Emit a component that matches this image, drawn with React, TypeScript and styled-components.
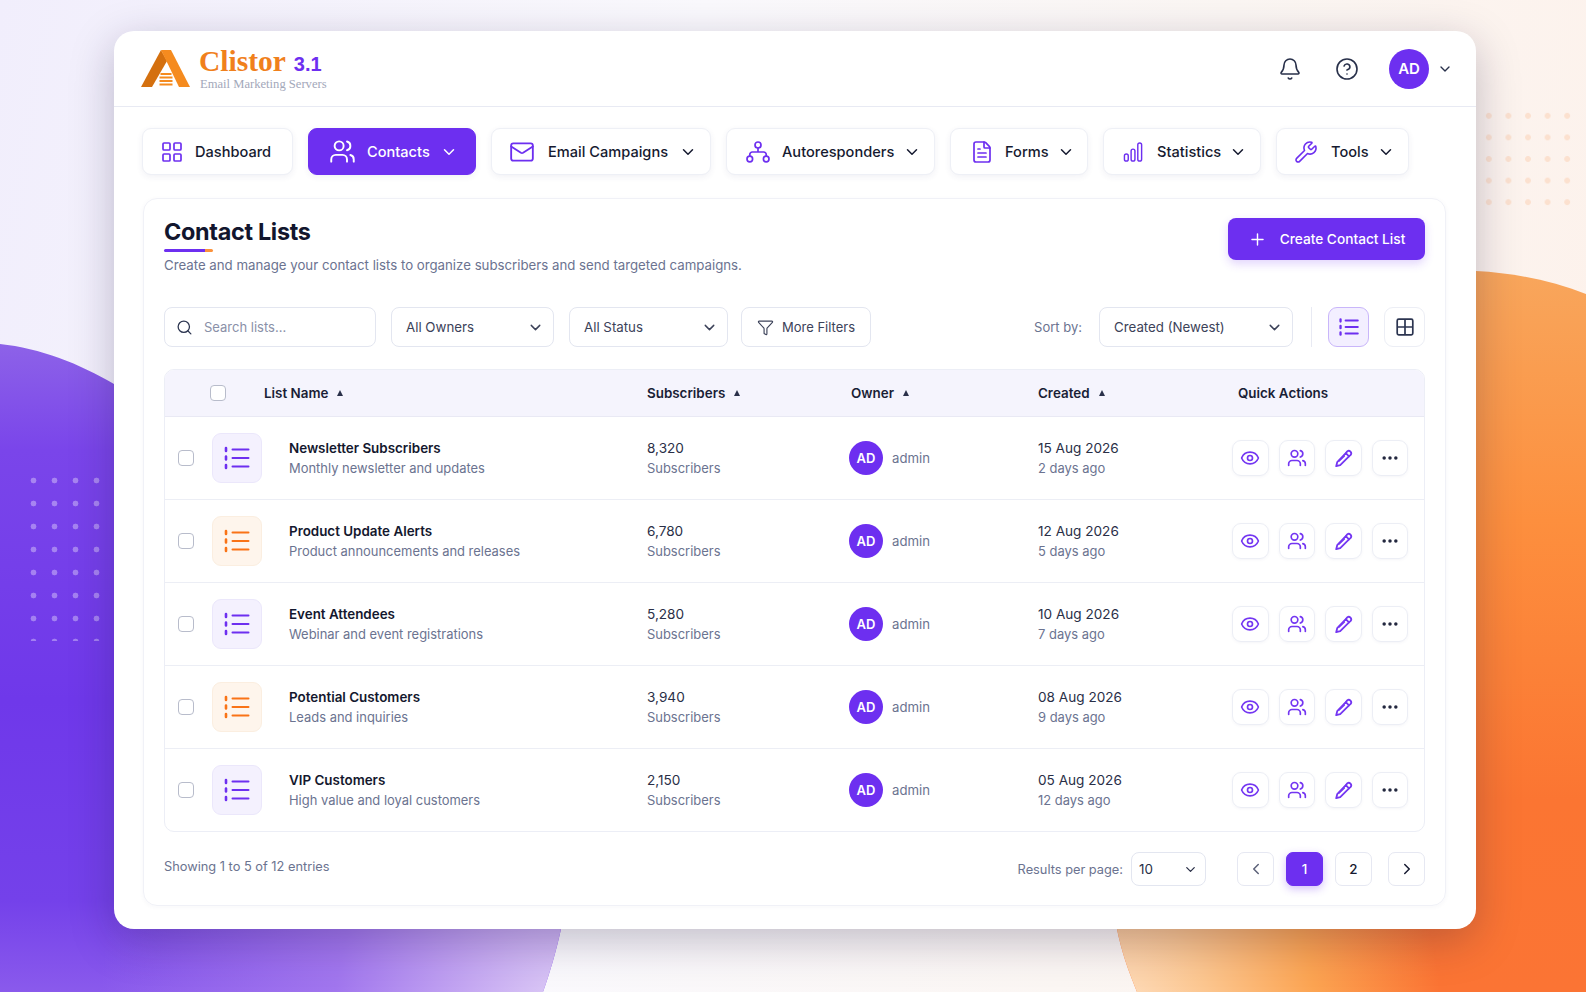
import styled, { createGlobalStyle } from "styled-components";
import {
  Bell,
  ChevronDown,
  ChevronLeft,
  ChevronRight,
  CircleHelp,
  Ellipsis,
  Eye,
  FileText,
  Funnel,
  LayoutGrid,
  Mail,
  Plus,
  Search,
  Users,
  Wrench,
} from "lucide-react";
import type { ReactNode } from "react";

const purple = "#6d2ff0";
const ink = "#161a30";
const muted = "#6b7390";
const line = "#e8eaf3";

const GlobalStyle = createGlobalStyle`
  * { box-sizing: border-box; }
  html, body { margin: 0; height: 100%; }
  body {
    font-family: Inter, "Liberation Sans", sans-serif;
    color: ${ink};
    overflow: hidden;
  }
`;

const Page = styled.div`
  position: relative;
  width: 1586px;
  height: 992px;
  overflow: hidden;
  padding: 31px 110px 63px 114px;
  background: linear-gradient(100deg, #f1eefc 0%, #faf9fd 40%, #fbf6f3 70%, #fdf1ea 100%);
`;
const PurpleBlob = styled.div`
  position: absolute;
  inset: 0;
  clip-path: path("M0 344 C40 348 80 364 114 384 L600 600 L561 929 C556 952 550 972 543 992 L0 992 Z");
  background:
    radial-gradient(circle 470px at 570px 1010px, #e0d0f6 0%, #c5a8f2 22%, #a176ee 50%, rgba(125, 70, 236, 0) 100%),
    linear-gradient(180deg, #8d62e8 344px, #7a45ea 450px, #6f38ea 700px, #7441ea 900px, #8a5aec 992px);
`;
const OrangeBlob = styled.div`
  position: absolute;
  inset: 0;
  clip-path: path("M1476 271 C1515 273 1552 281 1586 294 L1586 992 L1137 992 C1128 970 1121 950 1117 929 L1100 600 Z");
  background:
    radial-gradient(circle 330px at 1110px 1010px, #fee0c4 0%, #fcc68f 30%, #fca452 62%, rgba(252, 140, 60, 0) 100%),
    linear-gradient(180deg, #f8a65c 271px, #fd8f3e 520px, #fb7532 800px, #fb7434 992px);
`;
const Dots = styled.div<{ $color: string; $stepX: number; $stepY: number }>`
  position: absolute;
  background-image: radial-gradient(circle, ${(p) => p.$color} 2.6px, transparent 3.2px);
  background-size: ${(p) => p.$stepX}px ${(p) => p.$stepY}px;
`;
const LeftDots = styled(Dots)`
  left: 23px;
  top: 469px;
  width: 84px;
  height: 172px;
`;
const RightDots = styled(Dots)`
  left: 1479px;
  top: 105px;
  width: 98px;
  height: 108px;
`;

const Card = styled.div`
  position: relative;
  height: 898px;
  background: #fff;
  border-radius: 20px;
  box-shadow: 0 12px 44px rgba(30, 20, 60, 0.26);
`;
const TopBar = styled.header`
  height: 76px;
  display: flex;
  align-items: center;
  justify-content: space-between;
  padding: 0 23px 0 27px;
  border-bottom: 1px solid ${line};
`;
const Brand = styled.div`
  display: flex;
  align-items: center;
  gap: 9px;
`;
const BrandText = styled.div`
  font-family: "Liberation Serif", serif;
  display: flex;
  flex-direction: column;
  padding-top: 1px;
`;
const BrandName = styled.div`
  font-size: 29.500px;
  line-height: 28px;
  font-weight: 700;
  color: #f0801c;
  display: flex;
  align-items: baseline;
  gap: 8px;
`;
const BrandVersion = styled.span`
  font-family: "Liberation Sans", sans-serif;
  font-size: 20px;
  color: ${purple};
`;
const BrandTag = styled.div`
  font-size: 12.600px;
  line-height: 13px;
  margin-left: 1px;
  color: #a3a8ba;
`;
const TopActions = styled.div`
  display: flex;
  align-items: center;
`;
const TopIcon = styled.span<{ $gap: number }>`
  display: flex;
  color: #28304a;
  margin-right: ${(p) => p.$gap}px;
`;
const TopAvatar = styled.div`
  width: 40px;
  height: 40px;
  border-radius: 50%;
  background: ${purple};
  color: #fff;
  font-size: 15px;
  font-weight: 600;
  display: flex;
  align-items: center;
  justify-content: center;
  margin-right: 8px;
`;

const Nav = styled.nav`
  display: flex;
  gap: 15px;
  padding: 21px 28px 0;
`;
const NavItem = styled.div<{ $active?: boolean; $width: number }>`
  width: ${(p) => p.$width}px;
  height: 47px;
  display: flex;
  align-items: center;
  border-radius: 9px;
  font-size: 14.600px;
  font-weight: 500;
  background: ${(p) => (p.$active ? purple : "#fff")};
  color: ${(p) => (p.$active ? "#fff" : ink)};
  border: 1px solid ${(p) => (p.$active ? purple : "#eef0f6")};
  box-shadow: 0 2px 6px rgba(60, 60, 110, 0.07);
`;
const NavIconSlot = styled.span<{ $slot: number; $active?: boolean }>`
  width: ${(p) => p.$slot}px;
  flex: none;
  display: flex;
  justify-content: center;
  color: ${(p) => (p.$active ? "#fff" : purple)};
`;
const NavLabel = styled.span<{ $offset: number }>`
  margin-left: ${(p) => p.$offset}px;
  padding-top: 1px;
`;
const NavChevron = styled.span<{ $inset: number }>`
  display: flex;
  margin-left: auto;
  margin-right: ${(p) => p.$inset}px;
`;

const Panel = styled.section`
  margin: 23px 30px 0 29px;
  height: 708px;
  padding: 19px 20px 0 20px;
  border: 1px solid #f0f1f7;
  border-radius: 14px;
  box-shadow: 0 1px 5px rgba(60, 60, 110, 0.04);
`;
const PanelHead = styled.div`
  display: flex;
  justify-content: space-between;
  align-items: flex-start;
  height: 89px;
`;
const Title = styled.h1`
  margin: 0;
  font-size: 23.400px;
  line-height: 28px;
  font-weight: 700;
  letter-spacing: -0.3px;
  color: #12162e;
`;
const TitleRule = styled.div`
  width: 49px;
  height: 3px;
  margin-top: 3px;
  border-radius: 2px;
  background: linear-gradient(90deg, ${purple} 0 84%, #fb923c 84% 100%);
`;
const Subtitle = styled.p`
  margin: 4px 0 0;
  font-size: 13.240px;
  line-height: 18px;
  color: ${muted};
`;
const PrimaryButton = styled.button`
  width: 197px;
  height: 42px;
  display: flex;
  align-items: center;
  justify-content: center;
  gap: 13px;
  border: 0;
  border-radius: 8px;
  background: ${purple};
  color: #fff;
  font: 500 13.700px Inter, sans-serif;
  box-shadow: 0 4px 10px rgba(109, 47, 240, 0.2);
`;

const Filters = styled.div`
  display: flex;
  align-items: center;
  height: 40px;
`;
const Field = styled.div<{ $width: number; $gap?: number }>`
  width: ${(p) => p.$width}px;
  height: 40px;
  flex: none;
  margin-right: ${(p) => p.$gap ?? 0}px;
  display: flex;
  align-items: center;
  justify-content: space-between;
  padding: 0 9px 0 14px;
  border: 1px solid #e3e6f0;
  border-radius: 8px;
  font-size: 13.300px;
  color: #3c4259;
`;
const SearchField = styled(Field)`
  justify-content: flex-start;
  gap: 11px;
  padding-left: 11px;
  font-size: 13px;
  color: #8a90a8;
  svg {
    color: #2c3550;
  }
`;
const MoreFilters = styled(Field)`
  justify-content: center;
  gap: 8px;
  padding: 0;
  font-size: 13px;
`;
const SortLabel = styled.span`
  margin-left: auto;
  margin-right: 17px;
  font-size: 13px;
  color: ${muted};
`;
const Divider = styled.div`
  width: 1px;
  height: 40px;
  margin: 0 16px 0 18px;
  background: #e8eaf3;
`;
const ViewButton = styled.div<{ $active?: boolean }>`
  width: 41px;
  height: 40px;
  flex: none;
  display: flex;
  align-items: center;
  justify-content: center;
  border-radius: 9px;
  background: ${(p) => (p.$active ? "#f3efff" : "#fff")};
  border: 1px solid ${(p) => (p.$active ? "#c9b6fa" : "#eceef5")};
  color: ${(p) => (p.$active ? purple : "#2c3550")};
  margin-left: ${(p) => (p.$active ? 0 : 15)}px;
`;

const Table = styled.div`
  margin-top: 22px;
  border: 1px solid #eceef6;
  border-radius: 10px;
  overflow: hidden;
`;
const HeadRow = styled.div`
  height: 47px;
  display: grid;
  grid-template-columns: 99px 383px 204px 187px 200px 1fr;
  align-items: center;
  background: #f5f4fd;
  border-bottom: 1px solid #e9e9f4;
  font-size: 13.400px;
  font-weight: 600;
  color: #1a1e36;
`;
const HeadCell = styled.div`
  display: flex;
  align-items: center;
  gap: 9px;
`;
const SortMark = styled.span`
  width: 0;
  height: 0;
  border-left: 3.500px solid transparent;
  border-right: 3.500px solid transparent;
  border-bottom: 6px solid #2a304a;
`;
const Check = styled.span<{ $inset: number }>`
  display: block;
  width: 16px;
  height: 16px;
  margin-left: ${(p) => p.$inset}px;
  flex: none;
  border: 1.500px solid #b8bccb;
  border-radius: 4px;
  background: #fff;
`;
const Row = styled.div`
  height: 83px;
  display: grid;
  grid-template-columns: 124px 358px 202px 189px 194px 1fr;
  align-items: center;
  border-bottom: 1px solid #eceef5;
  &:last-child {
    height: 82px;
    border-bottom: 0;
  }
`;
const SelectCell = styled.div`
  display: flex;
  align-items: center;
`;
const ListBadge = styled.div<{ $tone: string; $bg: string; $edge: string }>`
  width: 50px;
  height: 50px;
  margin-left: 18px;
  flex: none;
  border-radius: 9px;
  display: flex;
  align-items: center;
  justify-content: center;
  color: ${(p) => p.$tone};
  background: ${(p) => p.$bg};
  border: 1px solid ${(p) => p.$edge};
`;
const Primary = styled.div`
  font-size: 13.400px;
  line-height: 20px;
  font-weight: 600;
  color: #14182e;
`;
const PlainPrimary = styled(Primary)`
  font-size: 13.600px;
  font-weight: 400;
  color: #2a2f47;
`;
const Secondary = styled.div`
  font-size: 12.950px;
  line-height: 21px;
  color: ${muted};
`;
const OwnerCell = styled.div`
  display: flex;
  align-items: center;
  gap: 9px;
  font-size: 13.200px;
  color: ${muted};
`;
const OwnerAvatar = styled.div`
  width: 34px;
  height: 34px;
  border-radius: 50%;
  background: ${purple};
  color: #fff;
  font-size: 13px;
  font-weight: 600;
  display: flex;
  align-items: center;
  justify-content: center;
`;
const Actions = styled.div`
  display: flex;
  gap: 10px;
`;
const ActionButton = styled.div<{ $dark?: boolean }>`
  width: 36.500px;
  height: 36px;
  border-radius: 9px;
  border: 1px solid #eceef5;
  display: flex;
  align-items: center;
  justify-content: center;
  color: ${(p) => (p.$dark ? "#23283f" : "#7436f2")};
  box-shadow: 0 1px 3px rgba(60, 60, 110, 0.05);
`;

const Footer = styled.div`
  display: flex;
  align-items: center;
  margin-top: 20px;
  height: 34px;
`;
const Showing = styled.span`
  font-size: 12.800px;
  color: ${muted};
  margin-top: -5px;
`;
const PerPage = styled.span`
  margin-left: auto;
  margin-right: 8px;
  font-size: 12.800px;
  color: ${muted};
`;
const PerPageSelect = styled.div`
  width: 75px;
  height: 34px;
  display: flex;
  align-items: center;
  justify-content: space-between;
  padding: 0 7px;
  margin-right: 31px;
  border: 1px solid #e3e6f0;
  border-radius: 8px;
  font-size: 13.400px;
  color: #2a2f47;
`;
const PageButton = styled.div<{ $active?: boolean; $gap: number }>`
  width: 37px;
  height: 34px;
  margin-right: ${(p) => p.$gap}px;
  display: flex;
  align-items: center;
  justify-content: center;
  border-radius: 7px;
  font-size: 13.400px;
  font-weight: 500;
  color: ${(p) => (p.$active ? "#fff" : ink)};
  background: ${(p) => (p.$active ? purple : "#fff")};
  border: 1px solid ${(p) => (p.$active ? purple : "#e6e8f2")};
  box-shadow: ${(p) => (p.$active ? "0 3px 8px rgba(109, 47, 240, 0.3)" : "none")};
`;

const Logo = () => (
  <svg width="49" height="37" viewBox="0 0 49 37">
    <polygon points="0,37 20,0 26,11 11,37" fill="#d4700f" />
    <polygon points="20,0 30,0 49,37 38,37" fill="#f58b1f" />
    <g fill="#f58b1f">
      <rect x="19.500" y="23" width="11" height="2" />
      <rect x="18.500" y="26.500" width="13" height="2" />
      <rect x="18.500" y="30" width="13" height="2" />
      <rect x="18.500" y="33.500" width="13" height="2" />
    </g>
  </svg>
);

const ListGlyph = ({ size = 26, weight = 2 }: { size?: number; weight?: number }) => (
  <svg
    width={size}
    height={size}
    viewBox="0 0 26 26"
    fill="none"
    stroke="currentColor"
    strokeWidth={weight}
    strokeLinecap="round"
  >
    <path d="M8.500 4.500h16M8.500 13h16M8.500 21.500h16" />
    <path strokeWidth={weight + 0.6} d="M2 3v3M2 11.500v3M2 20v3" />
  </svg>
);

const NetworkIcon = () => (
  <svg width="24" height="24" viewBox="0 0 24 24" fill="none" stroke="currentColor" strokeWidth="1.700">
    <circle cx="12" cy="5" r="3" />
    <circle cx="3.800" cy="19" r="2.800" />
    <circle cx="20.200" cy="19" r="2.800" />
    <path d="M3.800 16v-1.500a2.500 2.500 0 0 1 2.500-2.500h11.400a2.500 2.500 0 0 1 2.500 2.500V16M12 8v4" />
  </svg>
);

const BarsIcon = () => (
  <svg width="21" height="22" viewBox="0 0 22 22" fill="none" stroke="currentColor" strokeWidth="1.500">
    <rect x="1.500" y="13" width="4" height="7.500" rx="2" />
    <rect x="8.500" y="8" width="4" height="12.500" rx="2" />
    <rect x="15.500" y="1.500" width="4" height="19" rx="2" />
  </svg>
);

const GridIcon = () => (
  <svg width="18" height="18" viewBox="0 0 18 18" fill="none" stroke="currentColor" strokeWidth="1.700">
    <rect x="1.200" y="1.200" width="15.600" height="15.600" rx="1.500" />
    <path d="M9 1.200v15.600M1.200 9h15.600" />
  </svg>
);

const PenIcon = () => (
  <svg width="21" height="21" viewBox="0 0 21 21" fill="none" stroke="currentColor" strokeWidth="1.800" strokeLinejoin="round" strokeLinecap="round">
    <path d="M12.800 5.200 16 8.400 7.200 17.200l-4 1 1-4z" />
    <path d="M12.800 5.200l1.400-1.800a2.500 2.500 0 0 1 3.500 3.500L16 8.400" />
    <path d="M6 13.200 11.500 8" strokeWidth="1.200" />
  </svg>
);

type ListRow = {
  name: string;
  description: string;
  count: string;
  date: string;
  age: string;
  warm?: boolean;
};

const rows: ListRow[] = [
  { name: "Newsletter Subscribers", description: "Monthly newsletter and updates", count: "8,320", date: "15 Aug 2026", age: "2 days ago" },
  { name: "Product Update Alerts", description: "Product announcements and releases", count: "6,780", date: "12 Aug 2026", age: "5 days ago", warm: true },
  { name: "Event Attendees", description: "Webinar and event registrations", count: "5,280", date: "10 Aug 2026", age: "7 days ago" },
  { name: "Potential Customers", description: "Leads and inquiries", count: "3,940", date: "08 Aug 2026", age: "9 days ago", warm: true },
  { name: "VIP Customers", description: "High value and loyal customers", count: "2,150", date: "05 Aug 2026", age: "12 days ago" },
];

// center = icon midpoint from the item's left edge, text = label start
const navItems: {
  label: string;
  width: number;
  icon: ReactNode;
  center: number;
  text: number;
  chevron?: number;
  active?: boolean;
}[] = [
  { label: "Dashboard", width: 151, center: 29, text: 52, icon: <LayoutGrid size={24} strokeWidth={1.7} /> },
  { label: "Contacts", width: 168, center: 33, text: 58, chevron: 17, active: true, icon: <Users size={27} strokeWidth={1.7} /> },
  { label: "Email Campaigns", width: 220, center: 30, text: 56, chevron: 13, icon: <Mail size={26} strokeWidth={1.7} /> },
  { label: "Autoresponders", width: 209, center: 31, text: 55, chevron: 13, icon: <NetworkIcon /> },
  { label: "Forms", width: 138, center: 31, text: 54, chevron: 12, icon: <FileText size={24} strokeWidth={1.7} /> },
  { label: "Statistics", width: 158, center: 29, text: 53, chevron: 13, icon: <BarsIcon /> },
  { label: "Tools", width: 133, center: 29, text: 54, chevron: 13, icon: <Wrench size={24} strokeWidth={1.6} /> },
];

const App = () => {
  return (
    <Page>
      <GlobalStyle />
      <PurpleBlob />
      <OrangeBlob />
      <LeftDots $color="rgba(255,255,255,0.35)" $stepX={21} $stepY={23} />
      <RightDots $color="rgba(249,160,100,0.22)" $stepX={19.600} $stepY={21.600} />
      <Card>
        <TopBar>
          <Brand>
            <Logo />
            <BrandText>
              <BrandName>
                Clistor <BrandVersion>3.1</BrandVersion>
              </BrandName>
              <BrandTag>Email Marketing Servers</BrandTag>
            </BrandText>
          </Brand>
          <TopActions>
            <TopIcon $gap={33}>
              <Bell size={24} strokeWidth={1.6} />
            </TopIcon>
            <TopIcon $gap={30}>
              <CircleHelp size={24} strokeWidth={1.6} />
            </TopIcon>
            <TopAvatar>AD</TopAvatar>
            <ChevronDown size={16} color="#28304a" />
          </TopActions>
        </TopBar>

        <Nav>
          {navItems.map((item) => (
            <NavItem key={item.label} $active={item.active} $width={item.width}>
              <NavIconSlot $slot={item.center * 2} $active={item.active}>
                {item.icon}
              </NavIconSlot>
              <NavLabel $offset={item.text - item.center * 2}>{item.label}</NavLabel>
              {item.chevron && (
                <NavChevron $inset={item.chevron}>
                  <ChevronDown size={18} />
                </NavChevron>
              )}
            </NavItem>
          ))}
        </Nav>

        <Panel>
          <PanelHead>
            <div>
              <Title>Contact Lists</Title>
              <TitleRule />
              <Subtitle>Create and manage your contact lists to organize subscribers and send targeted campaigns.</Subtitle>
            </div>
            <PrimaryButton>
              <Plus size={19} strokeWidth={1.8} />
              Create Contact List
            </PrimaryButton>
          </PanelHead>

          <Filters>
            <SearchField $width={212} $gap={15}>
              <Search size={17} strokeWidth={1.8} />
              Search lists...
            </SearchField>
            <Field $width={163} $gap={15}>
              All Owners
              <ChevronDown size={17} />
            </Field>
            <Field $width={159} $gap={13}>
              All Status
              <ChevronDown size={17} />
            </Field>
            <MoreFilters $width={130}>
              <Funnel size={17} strokeWidth={1.6} />
              More Filters
            </MoreFilters>
            <SortLabel>Sort by:</SortLabel>
            <Field $width={194}>
              Created (Newest)
              <ChevronDown size={17} />
            </Field>
            <Divider />
            <ViewButton $active>
              <ListGlyph size={20} weight={2.4} />
            </ViewButton>
            <ViewButton>
              <GridIcon />
            </ViewButton>
          </Filters>

          <Table>
            <HeadRow>
              <SelectCell>
                <Check $inset={45} />
              </SelectCell>
              <HeadCell>
                List Name <SortMark />
              </HeadCell>
              <HeadCell>
                Subscribers <SortMark />
              </HeadCell>
              <HeadCell>
                Owner <SortMark />
              </HeadCell>
              <HeadCell>
                Created <SortMark />
              </HeadCell>
              <HeadCell>Quick Actions</HeadCell>
            </HeadRow>
            {rows.map((row) => (
              <Row key={row.name}>
                <SelectCell>
                  <Check $inset={13} />
                  <ListBadge
                    $tone={row.warm ? "#f97316" : purple}
                    $bg={row.warm ? "#fef5ec" : "#f4f1fe"}
                    $edge={row.warm ? "#fbeee0" : "#ebe7fb"}
                  >
                    <ListGlyph />
                  </ListBadge>
                </SelectCell>
                <div>
                  <Primary>{row.name}</Primary>
                  <Secondary>{row.description}</Secondary>
                </div>
                <div>
                  <PlainPrimary>{row.count}</PlainPrimary>
                  <Secondary>Subscribers</Secondary>
                </div>
                <OwnerCell>
                  <OwnerAvatar>AD</OwnerAvatar>
                  admin
                </OwnerCell>
                <div>
                  <PlainPrimary>{row.date}</PlainPrimary>
                  <Secondary>{row.age}</Secondary>
                </div>
                <Actions>
                  <ActionButton>
                    <Eye size={20} strokeWidth={2} />
                  </ActionButton>
                  <ActionButton>
                    <Users size={20} strokeWidth={2} />
                  </ActionButton>
                  <ActionButton>
                    <PenIcon />
                  </ActionButton>
                  <ActionButton $dark>
                    <Ellipsis size={20} strokeWidth={2.2} />
                  </ActionButton>
                </Actions>
              </Row>
            ))}
          </Table>

          <Footer>
            <Showing>Showing 1 to 5 of 12 entries</Showing>
            <PerPage>Results per page:</PerPage>
            <PerPageSelect>
              10
              <ChevronDown size={15} />
            </PerPageSelect>
            <PageButton $gap={12}>
              <ChevronLeft size={18} color="#5b6078" />
            </PageButton>
            <PageButton $active $gap={12}>
              1
            </PageButton>
            <PageButton $gap={16}>2</PageButton>
            <PageButton $gap={0}>
              <ChevronRight size={18} />
            </PageButton>
          </Footer>
        </Panel>
      </Card>
    </Page>
  );
};

export default App;
